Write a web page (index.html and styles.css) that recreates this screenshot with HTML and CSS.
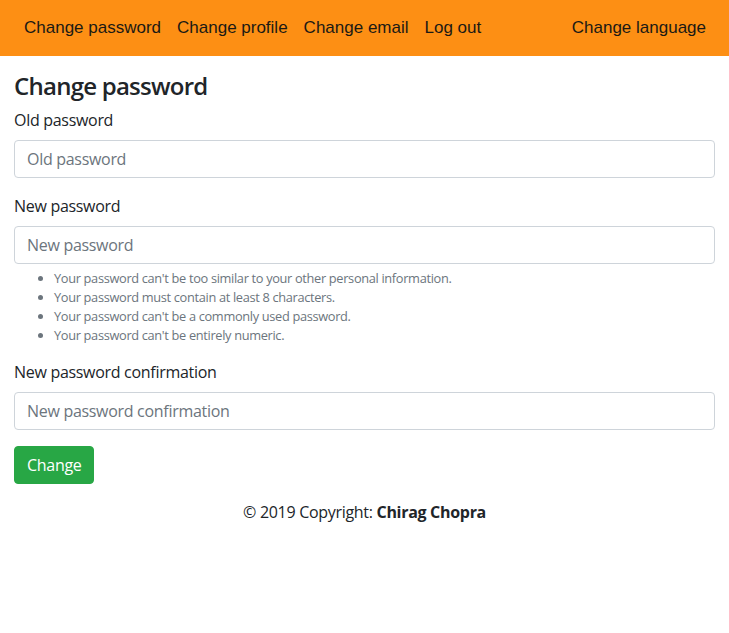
FILE: index.html
```html
<!DOCTYPE html>
<html lang="en">
<head>
<meta charset="utf-8">
<title>Change password</title>
<link rel="stylesheet" href="styles.css">
</head>
<body>
<nav class="navbar">
  <ul class="nav-list">
    <li><a class="nav-link" href="#">Change password</a></li>
    <li><a class="nav-link" href="#">Change profile</a></li>
    <li><a class="nav-link" href="#">Change email</a></li>
    <li><a class="nav-link" href="#">Log out</a></li>
  </ul>
  <ul class="nav-list">
    <li><a class="nav-link" href="#">Change language</a></li>
  </ul>
</nav>
<main class="container">
  <h4 class="title">Change password</h4>
  <form class="form">
    <div class="form-group">
      <label class="label" for="old">Old password</label>
      <input class="input" id="old" type="password" placeholder="Old password">
    </div>
    <div class="form-group">
      <label class="label" for="new1">New password</label>
      <input class="input" id="new1" type="password" placeholder="New password">
      <small class="help">
        <ul class="help-list">
          <li>Your password can't be too similar to your other personal information.</li>
          <li>Your password must contain at least 8 characters.</li>
          <li>Your password can't be a commonly used password.</li>
          <li>Your password can't be entirely numeric.</li>
        </ul>
      </small>
    </div>
    <div class="form-group">
      <label class="label" for="new2">New password confirmation</label>
      <input class="input" id="new2" type="password" placeholder="New password confirmation">
    </div>
    <button class="btn" type="button">Change</button>
  </form>
  <footer class="footer">© 2019 Copyright: <strong>Chirag Chopra</strong></footer>
</main>
</body>
</html>
```

FILE: styles.css
```css
* { box-sizing: border-box; }
body {
  margin: 0;
  font-family: "Open Sans", "Segoe UI", sans-serif;
  font-size: 16px;
  line-height: 1.5;
  letter-spacing: -0.3px;
  color: #212529;
  background: #fff;
}
.navbar {
  height: 56px;
  background: #fd8f14;
  display: flex;
  justify-content: space-between;
  align-items: center;
  padding: 0 15px 0 16px;
}
.nav-list {
  display: flex;
  list-style: none;
  margin: 0;
  padding: 0;
}
.nav-link {
  display: block;
  padding: 8px 8px;
  font-family: "Liberation Sans", Arial, sans-serif;
  font-size: 17px;
  line-height: 20px;
  letter-spacing: 0;
  color: #1b1a14;
  text-decoration: none;
}
.container {
  padding: 16px 14px 0 14px;
}
.title {
  margin: 0 0 7px 0;
  font-size: 24px;
  font-weight: 600;
  line-height: 1.2;
  letter-spacing: -0.75px;
}
.form { margin-bottom: 16px; }
.form-group { margin-bottom: 16px; }
.label {
  display: inline-block;
  margin-bottom: 8px;
}
.input {
  display: block;
  width: 100%;
  height: 38px;
  padding: 6px 12px;
  font-family: inherit;
  font-size: 16px;
  line-height: 1.5;
  letter-spacing: -0.3px;
  color: #495057;
  background: #fff;
  border: 1px solid #ced4da;
  border-radius: 4px;
}
.input::placeholder { color: #6c757d; opacity: 1; }
.help {
  display: block;
  margin-top: 5px;
  margin-bottom: -1px;
  font-size: 12.8px;
  letter-spacing: -0.33px;
  color: #6c757d;
}
.help-list {
  margin: 0;
  padding-left: 40px;
}
.help-list li { line-height: 19px; }
.btn {
  display: inline-block;
  padding: 6px 12px;
  font-family: inherit;
  font-size: 16px;
  line-height: 1.5;
  letter-spacing: -0.3px;
  color: #fff;
  background: #28a745;
  border: 1px solid #28a745;
  border-radius: 4px;
}
.footer {
  text-align: center;
}
```
